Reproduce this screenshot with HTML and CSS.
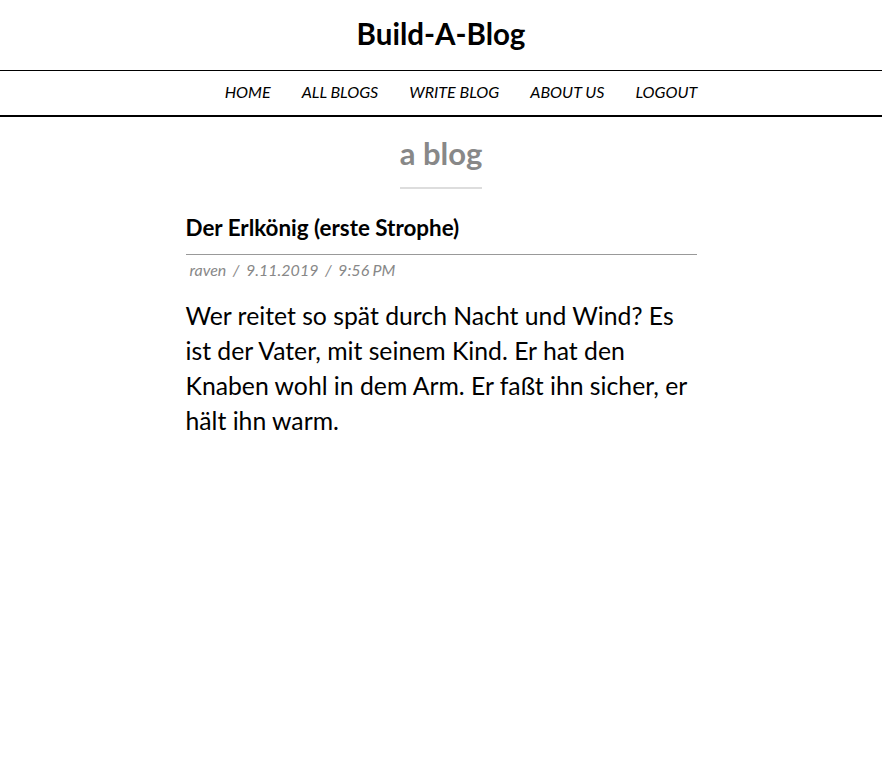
FILE: index.html
```html
<!DOCTYPE html>
<html>
<head>
<meta charset="utf-8">
<link rel="stylesheet" href="styles.css">
</head>
<body>
<header class="site-header">
  <h1 class="site-title">Build-A-Blog</h1>
</header>
<nav class="site-nav">
  <ul class="nav-list">
    <li><a href="#">HOME</a></li>
    <li><a href="#">ALL BLOGS</a></li>
    <li><a href="#">WRITE BLOG</a></li>
    <li><a href="#">ABOUT US</a></li>
    <li><a href="#">LOGOUT</a></li>
  </ul>
</nav>
<main class="content">
  <div class="page-heading"><h2 class="page-title">a blog</h2></div>
  <article class="post">
    <h3 class="post-title">Der Erlkönig (erste Strophe)</h3>
    <div class="post-meta">raven &nbsp;/ &nbsp;9.11.2019 &nbsp;/ &nbsp;9:56 PM</div>
    <p class="post-body">Wer reitet so spät durch Nacht und Wind? Es ist der Vater, mit seinem Kind. Er hat den Knaben wohl in dem Arm. Er faßt ihn sicher, er hält ihn warm.</p>
  </article>
</main>
</body>
</html>
```
FILE: styles.css
```css
html, body {
  margin: 0;
  padding: 0;
  background: #fff;
  color: #000;
  font-family: Lato, "Noto Sans", sans-serif;
}
.site-header {
  height: 70px;
  border-bottom: 1px solid #000;
  display: flex;
  align-items: center;
  justify-content: center;
}
.site-title {
  margin: 0 0 4px;
  font-size: 29.5px;
  font-weight: 700;
}
.site-nav {
  border-bottom: 2px solid #000;
}
.nav-list {
  list-style: none;
  margin: 0;
  padding: 0 0 0 40px;
  height: 44px;
  display: flex;
  justify-content: center;
  align-items: center;
}
.nav-list li {
  padding: 0 15.5px;
}
.nav-list a {
  color: #000;
  text-decoration: none;
  font-style: italic;
  font-size: 16.1px;
  position: relative;
  top: -2px;
}
.content {
  width: 511px;
  margin: 0 auto;
}
.page-heading {
  text-align: center;
  padding-top: 17px;
}
.page-title {
  display: inline-block;
  margin: 0;
  font-size: 31px;
  font-weight: 700;
  color: #888;
  padding-bottom: 15px;
  border-bottom: 2px solid #ddd;
}
.post-title {
  margin: 25px 0 0;
  font-size: 22.4px;
  font-weight: 700;
  padding-bottom: 13px;
  border-bottom: 1px solid #999;
}
.post-meta {
  padding: 5px 0 0 4px;
  font-size: 16px;
  font-style: italic;
  color: #888;
  word-spacing: -0.5px;
}
.post-body {
  margin: 19px 0 0;
  font-size: 24.75px;
  line-height: 35px;
}
```
